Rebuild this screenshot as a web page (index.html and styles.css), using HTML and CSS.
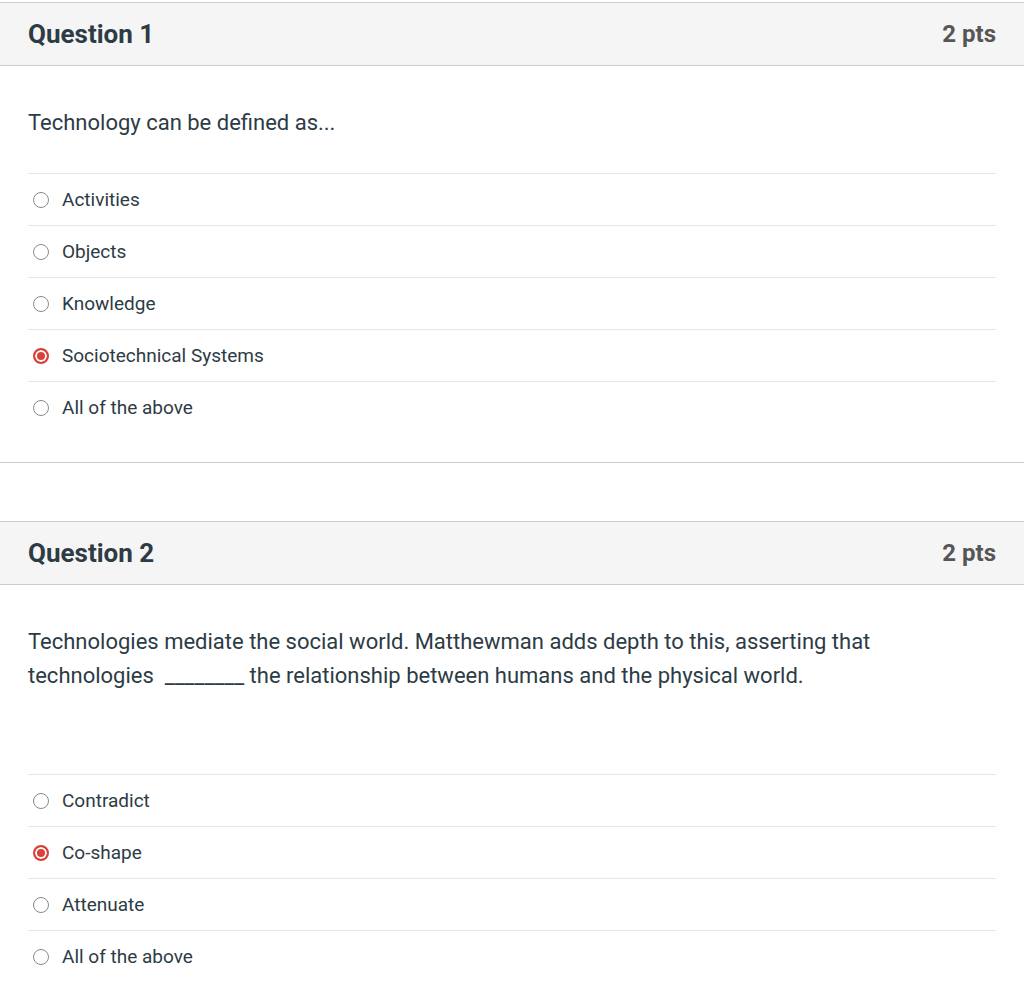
FILE: index.html
```html
<!DOCTYPE html>
<html lang="en">
<head>
    <meta charset="UTF-8">
    <title>Quiz</title>
    <link rel="stylesheet" href="styles.css">
</head>
<body>
<div class="question">
    <div class="header">
        <h2 class="title">Question 1</h2>
        <span class="pts">2 pts</span>
    </div>
    <div class="body">
        <p class="text">Technology can be defined as...</p>
        <ul class="answers">
            <li><span class="radio"></span>Activities</li>
            <li><span class="radio"></span>Objects</li>
            <li><span class="radio"></span>Knowledge</li>
            <li><span class="radio checked"></span>Sociotechnical Systems</li>
            <li><span class="radio"></span>All of the above</li>
        </ul>
    </div>
</div>
<div class="question">
    <div class="header">
        <h2 class="title">Question 2</h2>
        <span class="pts">2 pts</span>
    </div>
    <div class="body">
        <p class="text long">Technologies mediate the social world. Matthewman adds depth to this, asserting that<br>technologies &nbsp;________ the relationship between humans and the physical world.</p>
        <ul class="answers">
            <li><span class="radio"></span>Contradict</li>
            <li><span class="radio checked"></span>Co-shape</li>
            <li><span class="radio"></span>Attenuate</li>
            <li><span class="radio"></span>All of the above</li>
        </ul>
    </div>
</div>
</body>
</html>
```

FILE: styles.css
```css
body {
    margin: 0;
    padding-top: 2px;
    font-family: Roboto, "Liberation Sans", sans-serif;
    color: #2d3b45;
    background: #fff;
}
.question {
    border-top: 1px solid #c7cdd1;
    border-bottom: 1px solid #c7cdd1;
    margin-bottom: 58px;
}
.header {
    display: flex;
    align-items: center;
    justify-content: space-between;
    height: 62px;
    padding: 0 28px;
    background: #f5f5f5;
    border-bottom: 1px solid #c7cdd1;
}
.title {
    margin: 0;
    font-size: 26px;
    font-weight: 700;
    color: #2d3b45;
}
.pts {
    font-size: 24px;
    font-weight: 700;
    color: #565656;
}
.body {
    padding: 40px 28px 29px;
}
.text {
    margin: 0 0 33px;
    font-size: 22px;
    line-height: 34px;
}
.text.long {
    margin-bottom: 81px;
}
.answers {
    margin: 0;
    padding: 0;
    list-style: none;
}
.answers li {
    display: flex;
    align-items: center;
    height: 51px;
    border-top: 1px solid #e6e6e6;
    font-size: 19px;
}
.radio {
    box-sizing: border-box;
    width: 16px;
    height: 16px;
    margin: 0 13px 0 5px;
    border: 1px solid #8a8a8a;
    border-radius: 50%;
    background: #fff;
}
.radio.checked {
    border: 2px solid #d9403a;
    background: #d9403a;
    box-shadow: inset 0 0 0 2px #fff;
}
```
